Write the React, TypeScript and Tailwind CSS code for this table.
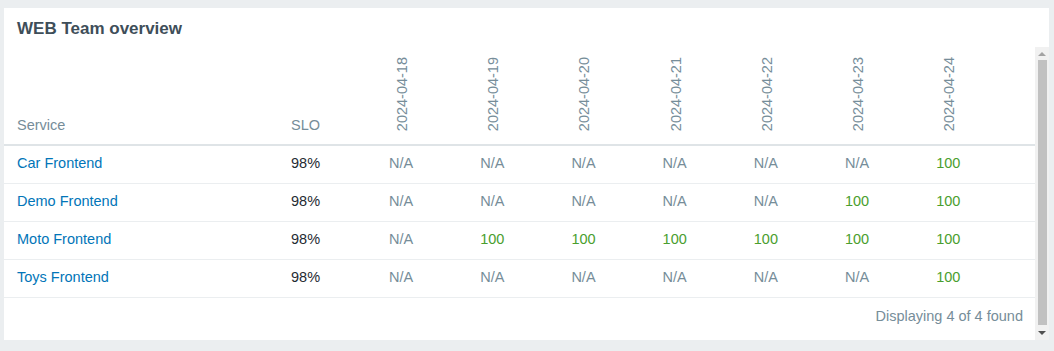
const dates = ["2024-04-18", "2024-04-19", "2024-04-20", "2024-04-21", "2024-04-22", "2024-04-23", "2024-04-24"];

const rows: { name: string; slo: string; values: (string | number)[] }[] = [
  { name: "Car Frontend", slo: "98%", values: ["N/A", "N/A", "N/A", "N/A", "N/A", "N/A", 100] },
  { name: "Demo Frontend", slo: "98%", values: ["N/A", "N/A", "N/A", "N/A", "N/A", 100, 100] },
  { name: "Moto Frontend", slo: "98%", values: ["N/A", 100, 100, 100, 100, 100, 100] },
  { name: "Toys Frontend", slo: "98%", values: ["N/A", "N/A", "N/A", "N/A", "N/A", "N/A", 100] },
];

function Scrollbar() {
  return (
    <div className="w-[14px] bg-[#f1f1f1] flex flex-col items-center">
      <div className="h-[13px] flex items-center justify-center">
        <div className="w-0 h-0 border-l-[4px] border-r-[4px] border-b-[4px] border-l-transparent border-r-transparent border-b-[#a3a3a3]" />
      </div>
      <div className="w-[9px] flex-1 bg-[#c1c1c1]" />
      <div className="h-[15px] flex items-center justify-center">
        <div className="w-0 h-0 border-l-[4px] border-r-[4px] border-t-[4px] border-l-transparent border-r-transparent border-t-[#505050]" />
      </div>
    </div>
  );
}

export default function App() {
  return (
    <div className="w-[1054px] h-[351px] bg-[#ebeef0] pt-[8px] pl-[4px] font-['Liberation_Sans',Arial,sans-serif]">
      <div className="w-[1045px] h-[332px] bg-white flex flex-col">
        <div className="h-[39px] pl-[13px] pt-[2px] flex items-center">
          <h1 className="text-[17px] font-bold text-[#3e4e59]">WEB Team overview</h1>
        </div>
        <div className="flex flex-1 min-h-0">
          <div className="flex-1 flex flex-col">
            <table className="table-fixed w-full text-[14.5px] border-collapse">
              <colgroup>
                <col className="w-[274px]" />
                <col className="w-[98px]" />
                {dates.map((d) => (
                  <col key={d} className="w-[91.2px]" />
                ))}
                <col />
              </colgroup>
              <thead>
                <tr className="h-[98px] border-b-2 border-[#dfe4e7] text-[#768d99]">
                  <th className="text-left font-normal align-bottom pl-[13px] pb-[7px]">Service</th>
                  <th className="text-left font-normal align-bottom pl-[13px] pb-[7px]">SLO</th>
                  {dates.map((d) => (
                    <th key={d} className="text-left font-normal align-bottom pl-[18px] pb-[6px]">
                      <span className="inline-block [writing-mode:vertical-rl] rotate-180 leading-[16px]">{d}</span>
                    </th>
                  ))}
                  <th />
                </tr>
              </thead>
              <tbody>
                {rows.map((r) => (
                  <tr key={r.name} className="h-[38px] border-b border-[#ebeef0]">
                    <td className="pl-[13px] text-[#0275b8]">{r.name}</td>
                    <td className="pl-[13px] text-[#1f2c33]">{r.slo}</td>
                    {r.values.map((v, i) => (
                      <td key={i} className={`pl-[13px] ${v === "N/A" ? "text-[#768d99]" : "text-[#4a9e2e]"}`}>
                        {v}
                      </td>
                    ))}
                    <td />
                  </tr>
                ))}
              </tbody>
            </table>
            <div className="h-[38px] flex items-center justify-end pr-[12px] text-[14.5px] text-[#768d99]">
              Displaying 4 of 4 found
            </div>
          </div>
          <Scrollbar />
        </div>
      </div>
    </div>
  );
}
